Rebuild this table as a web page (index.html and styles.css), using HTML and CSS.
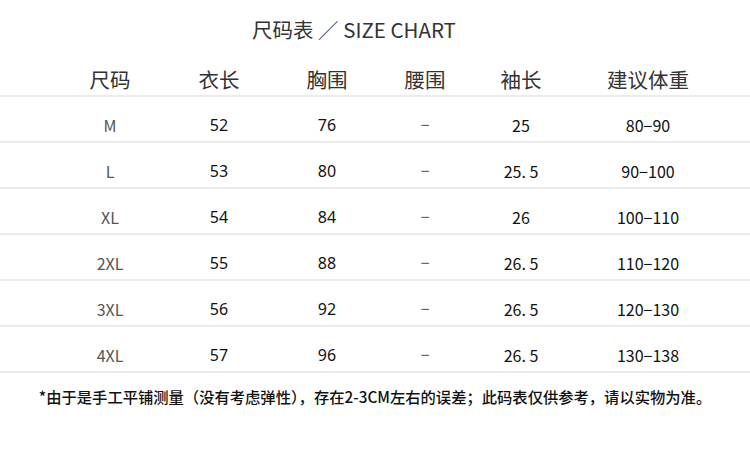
FILE: index.html
```html
<!DOCTYPE html>
<html lang="zh">
<head>
<meta charset="utf-8">
<title>尺码表</title>
<link rel="stylesheet" href="styles.css">
</head>
<body>
<div class="page">
  <h1 class="title">尺码表 ／ SIZE CHART</h1>
  <div class="table">
    <div class="row head">
      <span>尺码</span><span>衣长</span><span>胸围</span><span>腰围</span><span>袖长</span><span>建议体重</span>
    </div>
    <div class="row">
      <span class="size">M</span><span class="num">52</span><span class="num">76</span><span class="dash">−</span><span class="cjk">25</span><span class="cjk">80−90</span>
    </div>
    <div class="row">
      <span class="size">L</span><span class="num">53</span><span class="num">80</span><span class="dash">−</span><span class="cjk">25. 5</span><span class="cjk">90−100</span>
    </div>
    <div class="row">
      <span class="size">XL</span><span class="num">54</span><span class="num">84</span><span class="dash">−</span><span class="cjk">26</span><span class="cjk">100−110</span>
    </div>
    <div class="row">
      <span class="size">2XL</span><span class="num">55</span><span class="num">88</span><span class="dash">−</span><span class="cjk">26. 5</span><span class="cjk">110−120</span>
    </div>
    <div class="row">
      <span class="size">3XL</span><span class="num">56</span><span class="num">92</span><span class="dash">−</span><span class="cjk">26. 5</span><span class="cjk">120−130</span>
    </div>
    <div class="row">
      <span class="size">4XL</span><span class="num">57</span><span class="num">96</span><span class="dash">−</span><span class="cjk">26. 5</span><span class="cjk">130−138</span>
    </div>
  </div>
  <p class="note">*由于是手工平铺测量（没有考虑弹性），存在2-3CM左右的误差；此码表仅供参考，请以实物为准。</p>
</div>
</body>
</html>
```

FILE: styles.css
```css
* { box-sizing: border-box; }
html, body { margin: 0; padding: 0; background: #fff; }
body {
  font-family: "Noto Sans CJK SC", "Noto Sans", sans-serif;
  color: #222;
  width: 750px;
  height: 472px;
  overflow: hidden;
}
.page { display: flex; flex-direction: column; }
.title {
  margin: 0;
  height: 50px;
  padding: 15px 0 0 252px;
  font-size: 20.5px;
  line-height: 28px;
  font-weight: 400;
  color: #333;
}
.table { display: flex; flex-direction: column; }
.row {
  display: grid;
  grid-template-columns: 110px 108px 108px 88px 104px 150px;
  padding: 0 0 5px 55px;
  height: 46px;
  align-items: end;
  border-bottom: 2px solid #ececec;
}
.row span {
  text-align: center;
  font-size: 16px;
  line-height: 22px;
}
.row.head { height: 47px; }
.row.head span {
  font-size: 20.5px;
  line-height: 26px;
  color: #333;
  margin-bottom: -2px;
}
.size { color: #555; }
.num { color: #111; font-family: "Noto Sans", "Noto Sans CJK SC", sans-serif; }
.dash { color: #666; font-family: "Noto Sans", sans-serif; }
.cjk { color: #111; }
.note {
  margin: 13px 0 0;
  text-align: center;
  font-size: 15.3px;
  line-height: 20px;
  font-weight: 500;
  color: #111;
}
```
